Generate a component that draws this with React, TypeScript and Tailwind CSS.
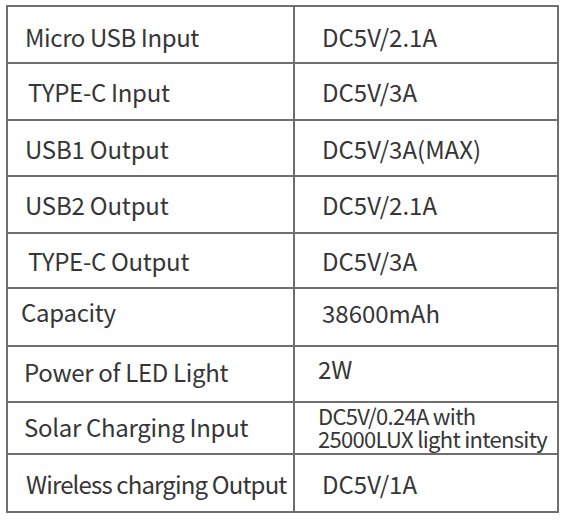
import React from 'react';

type Row = {
    label: string;
    value: React.ReactNode;
    h: string;
    lp: string;
    vp: string;
};

const rows: Row[] = [
    { label: 'Micro USB Input', value: 'DC5V/2.1A', h: 'h-[57px]', lp: 'pl-[17px] pt-[5px] tracking-[-0.4px]', vp: 'pl-[27px] pt-[5px]' },
    { label: 'TYPE-C Input', value: 'DC5V/3A', h: 'h-[57px]', lp: 'pl-[20px] tracking-[-0.3px]', vp: 'pl-[27px]' },
    { label: 'USB1 Output', value: 'DC5V/3A(MAX)', h: 'h-[56px]', lp: 'pl-[17px] pt-[2px] tracking-[-0.2px]', vp: 'pl-[27px] pt-[2px]' },
    { label: 'USB2 Output', value: 'DC5V/2.1A', h: 'h-[57px]', lp: 'pl-[17px] tracking-[-0.2px]', vp: 'pl-[27px]' },
    { label: 'TYPE-C Output', value: 'DC5V/3A', h: 'h-[55px]', lp: 'pl-[20px] tracking-[-0.3px]', vp: 'pl-[27px]' },
    { label: 'Capacity', value: '38600mAh', h: 'h-[58px]', lp: 'pl-[13px] pb-[10px] tracking-[-0.3px]', vp: 'pl-[27px] pb-[8px]' },
    { label: 'Power of LED Light', value: '2W', h: 'h-[56px]', lp: 'pl-[16px] pb-[5px] tracking-[-0.3px]', vp: 'pl-[23px] pb-[10px]' },
    {
        label: 'Solar Charging Input',
        value: (
            <span className="flex flex-col text-[22px] tracking-[-0.7px]">
                <span className="block h-[23px] leading-[23px]">DC5V/0.24A with</span>
                <span className="block h-[23px] leading-[23px]">25000LUX light intensity</span>
            </span>
        ),
        h: 'h-[52px]',
        lp: 'pl-[16px] pb-[3px] tracking-[-0.3px]',
        vp: 'pl-[23px] pb-[2px]',
    },
    { label: 'Wireless charging Output', value: 'DC5V/1A', h: 'h-[58px]', lp: 'pl-[18px] pt-[2px] tracking-[-0.85px]', vp: 'pl-[27px] pt-[2px]' },
];

export default function App() {
    return (
        <div className="w-[568px] h-[520px] bg-white pt-[5px] pl-[6px] font-['Noto_Sans_CJK_SC',sans-serif] text-[#363636]">
            <div className="w-[553px] border-t-2 border-l-2 border-[#6f6f6f]">
                {rows.map((r) => (
                    <div key={r.label} className={`grid grid-cols-[287px_264px] ${r.h}`}>
                        <div className={`flex items-center border-r-2 border-b-2 border-[#6f6f6f] text-[24px] leading-none whitespace-nowrap ${r.lp}`}>
                            {r.label}
                        </div>
                        <div className={`flex items-center border-r-2 border-b-2 border-[#6f6f6f] text-[24px] leading-none whitespace-nowrap ${r.vp}`}>
                            {r.value}
                        </div>
                    </div>
                ))}
            </div>
        </div>
    );
}
